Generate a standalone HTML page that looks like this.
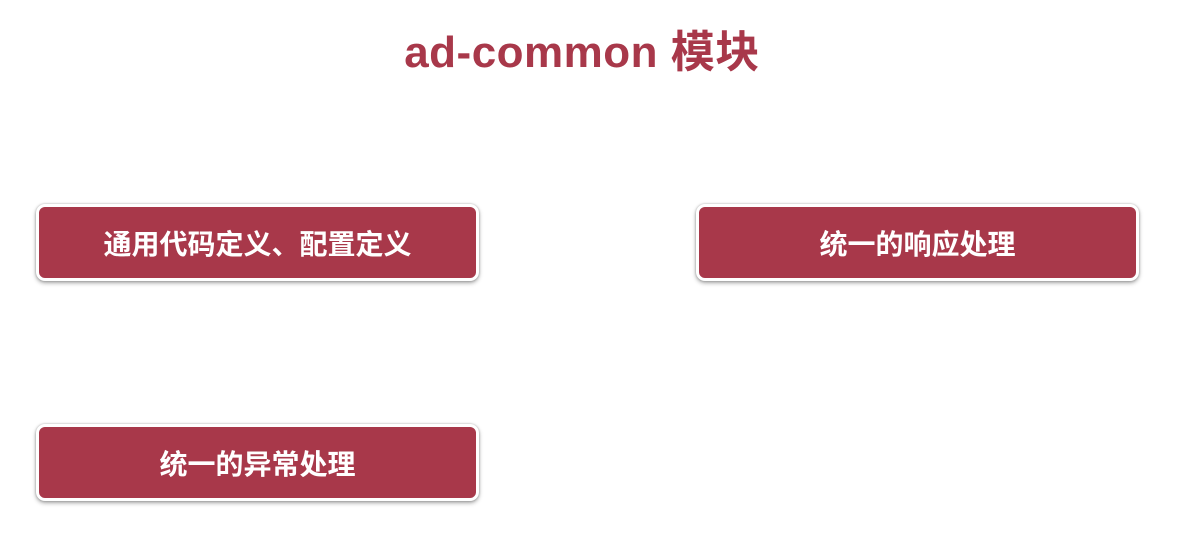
<!DOCTYPE html>
<html><head><meta charset="utf-8"><style>
body{margin:0;width:1190px;height:552px;background:#fff;position:relative;overflow:hidden;font-family:"Liberation Sans","Noto Sans CJK SC",sans-serif}
.t{position:absolute;left:0;width:1164px;top:16px;text-align:center;font-size:44px;font-weight:bold;color:#a8384a;letter-spacing:0.5px}
.b{position:absolute;width:437px;height:71px;background:#a8384a;border:3px solid #fff;border-radius:9px;box-shadow:0 2px 4px rgba(0,0,0,.35),0 0 2px rgba(0,0,0,.25);color:#fff;font-weight:bold;font-size:28px;display:flex;align-items:center;justify-content:center}
</style></head><body>
<div class="t">ad-common 模块</div>
<div class="b" style="left:36px;top:204px">通用代码定义、配置定义</div>
<div class="b" style="left:696px;top:204px">统一的响应处理</div>
<div class="b" style="left:36px;top:424px">统一的异常处理</div>
</body></html>
